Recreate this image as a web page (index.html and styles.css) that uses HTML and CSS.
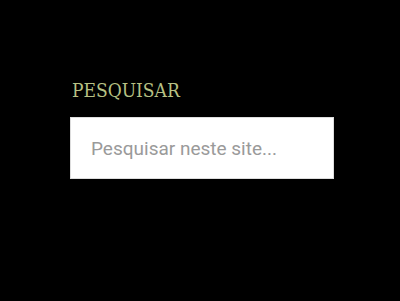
FILE: index.html
```html
<!DOCTYPE html>
<html lang="pt">
<head>
<meta charset="utf-8">
<link rel="stylesheet" href="styles.css">
</head>
<body>
<aside class="widget">
  <h2 class="widget-title">PESQUISAR</h2>
  <form class="search-form">
    <input class="search-field" type="search" placeholder="Pesquisar neste site...">
  </form>
</aside>
</body>
</html>
```
FILE: styles.css
```css
html, body {
  margin: 0;
  padding: 0;
  background: #000;
  height: 100%;
}
.widget {
  padding: 80px 0 0 70px;
  width: 264px;
}
.widget-title {
  margin: 0 0 17px 2px;
  font-family: "DejaVu Serif Condensed", "DejaVu Serif", serif;
  font-stretch: condensed;
  font-weight: normal;
  font-size: 19px;
  line-height: 20px;
  color: #b7c184;
}
.search-form {
  margin: 0;
}
.search-field {
  display: block;
  box-sizing: border-box;
  width: 264px;
  height: 62px;
  margin: 0;
  padding: 0 20px;
  border: 1px solid #ddd;
  background: #fff;
  font-family: Roboto, "Noto Sans", sans-serif;
  font-size: 19px;
  color: #555;
  outline: none;
}
.search-field::placeholder {
  color: #9a9a9a;
}
```
